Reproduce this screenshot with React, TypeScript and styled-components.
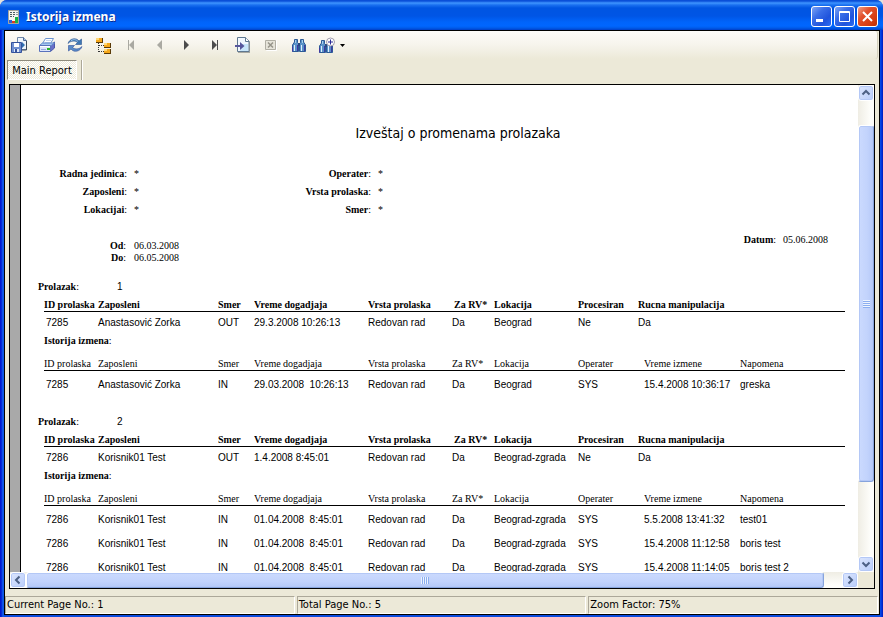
import React from 'react';
import styled, { createGlobalStyle, css } from 'styled-components';

const tahoma = '"DejaVu Sans Condensed", "DejaVu Sans", "Noto Sans", sans-serif';
const serif = '"Liberation Serif", "Times New Roman", serif';
const sans = '"Liberation Sans", Arial, sans-serif';

const GlobalStyle = createGlobalStyle`
  * { box-sizing: border-box; }
  html, body { margin: 0; padding: 0; background: #e4e2dc; }
  button { font: inherit; color: inherit; margin: 0; }
`;

const Window = styled.div`
  display: flex;
  flex-direction: column;
  height: 100vh;
  overflow: hidden;
  border-radius: 7px 7px 0 0;
  background: linear-gradient(90deg, #0019cf 0, #0019cf 1px, #0a3be0 2px, #1166ee 3px, #0a4ce0 4px, #0a4ce0 calc(100% - 3px), #0040e8 calc(100% - 2px), #0019b8 100%);
  font: 11px/14px ${tahoma};
  color: #000;
`;

const TitleBar = styled.header`
  display: flex;
  align-items: center;
  flex: none;
  height: 30px;
  padding: 3px 5px 0 7px;
  background: linear-gradient(180deg, #0a4fd8 0, #0a4fd8 1px, #3f95ff 3px, #1a70f0 5px, #0055e2 8px, #0055e5 16px, #0064fb 22px, #0066ff 26px, #005bea 28px, #003fc8 30px);
`;

const Title = styled.h1`
  flex: 1;
  margin: 0 0 0 6px;
  font: bold 12px/18px "Noto Sans", "Open Sans", sans-serif;
  color: #fff;
  text-shadow: 1px 1px 0 #0a2b90;
`;

const Captions = styled.div`
  display: flex;
  gap: 2px;
`;

const CaptionButton = styled.button<{ $close?: boolean }>`
  display: flex;
  width: 21px;
  height: 21px;
  padding: 0;
  border: 1px solid #fff;
  border-radius: 3px;
  background: ${(p) =>
    p.$close
      ? 'linear-gradient(135deg, #f0a088 0, #e2512c 35%, #d63c10 75%, #b93008 100%)'
      : 'linear-gradient(135deg, #7ea4f4 0, #3a6ee8 35%, #1f53dc 70%, #2a6df5 100%)'};
`;

const Client = styled.main`
  display: flex;
  flex-direction: column;
  flex: 1;
  min-height: 0;
  margin: 0 3px 2px 4px;
  border: 1px solid #000;
  background: #ece9d8;
`;

const Toolbar = styled.div`
  display: flex;
  flex: none;
  height: 28px;
  margin-right: 1px;
  border-right: 1px solid #d5d1bd;
  border-radius: 0 3px 3px 0;
  background: linear-gradient(180deg, #fdfcf9 0, #f6f4ec 50%, #ece9d8 100%);
`;

const ToolButton = styled.button<{ $menu?: boolean }>`
  display: flex;
  align-items: center;
  justify-content: ${(p) => (p.$menu ? 'flex-start' : 'center')};
  gap: 5px;
  width: ${(p) => (p.$menu ? 38 : 28)}px;
  padding: 0 0 0 ${(p) => (p.$menu ? 6 : 0)}px;
  border: 0;
  background: none;
`;

const Tabs = styled.nav`
  display: flex;
  flex: none;
  gap: 4px;
  height: 25px;
  padding: 1px 0 4px 2px;
`;

const Tab = styled.button`
  width: 70px;
  padding: 1px 0 0;
  border: 1px solid;
  border-color: #8d8a7c #fff #fff #8d8a7c;
  background: repeating-conic-gradient(#fff 0 25%, #ece9d8 0 50%) 0 0 / 2px 2px;
`;

const Divider = styled.div`
  width: 2px;
  border-left: 1px solid #aca899;
  border-right: 1px solid #fff;
`;

const Viewer = styled.section`
  display: grid;
  grid-template: minmax(0, 1fr) 16px / minmax(0, 1fr) 16px;
  flex: 1;
  min-height: 0;
  margin: 0 4px 7px;
  border: 1px solid #000;
  background: #ece9d8;
`;

const Canvas = styled.div`
  display: flex;
  overflow: hidden;
  background: #a9a9a9;
`;

const Paper = styled.article`
  flex: 1;
  min-width: 0;
  margin-left: 10px;
  padding: 38px 13px 0 17px;
  border-left: 1px solid #000;
  background: #fff;
  font: 10px/12px ${serif};
`;

const ReportTitle = styled.h2`
  margin: 0 0 22px;
  padding-left: 33px;
  font: 14px/20px "DejaVu Sans Condensed", "DejaVu Sans", sans-serif;
  font-weight: 400;
  text-align: center;
`;

const Parameters = styled.dl`
  display: grid;
  grid-template-columns: 89px 60px 170px 1fr;
  grid-auto-rows: 18px;
  column-gap: 7px;
  align-items: center;
  margin: 0;
`;

const Name = styled.dt`
  font-weight: 700;
  text-align: right;
  white-space: nowrap;
  & > span { font-weight: 400; }
`;

const Value = styled.dd`
  margin: 0;
`;

const Dates = styled.div`
  display: flex;
  justify-content: space-between;
  align-items: flex-start;
  padding: 15px 17px 14px 0;
`;

const Range = styled.dl`
  display: grid;
  grid-template-columns: 88px auto;
  column-gap: 8px;
  margin: 6px 0 0;
`;

const Printed = styled.dl`
  display: flex;
  gap: 7px;
  margin: 0;
`;

const Group = styled.section`
  margin-bottom: 18px;
`;

const GroupLabel = styled.h3`
  display: flex;
  margin: 0;
  font: bold 10px/18px ${serif};
  & > span { font-weight: 400; }
  & > output { margin-left: 38px; font: 10px/18px ${sans}; }
`;

const HistoryLabel = styled.h4`
  margin: -2px 0 5px 6px;
  font: bold 10px/18px ${serif};
  & > span { font-weight: 400; }
`;

const tableBase = css`
  width: calc(100% - 6px);
  margin-left: 6px;
  table-layout: fixed;
  border-collapse: separate;
  border-spacing: 0;
`;

const Table = styled.table<{ $plain?: boolean }>`
  ${tableBase}
  th {
    height: 16px;
    padding: ${(p) => (p.$plain ? 3 : 2)}px 0 0;
    overflow: hidden;
    border-bottom: 1px solid #000;
    font: ${(p) => (p.$plain ? 400 : 700)} 10px/12px ${serif};
    text-align: left;
    white-space: nowrap;
  }
  th:nth-child(6) { padding-left: ${(p) => (p.$plain ? 0 : 2)}px; }
  td {
    height: ${(p) => (p.$plain ? 24 : 22)}px;
    padding: ${(p) => (p.$plain ? 3 : 0)}px 0 0;
    font: 10px/12px ${sans};
    white-space: pre;
    vertical-align: middle;
  }
  td:first-child { padding-left: 2px; }
`;

const Col = styled.col<{ $w?: number }>`
  width: ${(p) => (p.$w ? `${p.$w}px` : 'auto')};
`;

const face = css`
  border: 1px solid #fff;
  border-radius: 3px;
  box-shadow: inset 0 0 0 1px #b4c8f6;
`;

const Scrollbar = styled.div<{ $vertical?: boolean }>`
  display: flex;
  flex-direction: ${(p) => (p.$vertical ? 'column' : 'row')};
  background: linear-gradient(${(p) => (p.$vertical ? '90deg' : '180deg')}, #efede4, #fefefb 80%);
`;

const ScrollButton = styled.button`
  display: flex;
  align-items: center;
  justify-content: center;
  flex: none;
  width: 16px;
  height: 16px;
  padding: 0;
  ${face}
  background: linear-gradient(135deg, #dce6fe, #b9cdfa);
`;

const Thumb = styled.div<{ $vertical?: boolean; $grow: number }>`
  display: flex;
  align-items: center;
  justify-content: center;
  flex: ${(p) => p.$grow} 1 0;
  ${face}
  border-right-color: #86a3dc;
  border-bottom-color: #86a3dc;
  background: linear-gradient(${(p) => (p.$vertical ? '90deg' : '180deg')}, #cbdafe, #c2d3fc 60%, #b5c9f8);
`;

const Space = styled.div<{ $grow: number }>`
  flex: ${(p) => p.$grow} 1 0;
`;

const Grip = styled.div<{ $vertical?: boolean }>`
  width: ${(p) => (p.$vertical ? 7 : 8)}px;
  height: ${(p) => (p.$vertical ? 8 : 7)}px;
  background: repeating-linear-gradient(${(p) => (p.$vertical ? '180deg' : '90deg')}, #eef4fe 0 1px, #8caef0 1px 2px);
`;

const StatusBar = styled.footer`
  display: grid;
  grid-template-columns: repeat(3, 1fr);
  gap: 2px;
  flex: none;
  height: 18px;
  padding-right: 1px;
`;

const StatusCell = styled.div`
  padding: 1px 0 0 1px;
  border: 1px solid;
  border-color: #aca899 #fff #fff #aca899;
  white-space: nowrap;
`;

const Icon = ({ w = 16, h = 16, children }: { w?: number; h?: number; children: React.ReactNode }) => (
  <svg width={w} height={h} viewBox={`0 0 ${w} ${h}`} aria-hidden="true">
    {children}
  </svg>
);

const AppIcon = () => (
  <Icon w={13} h={16}>
    <path d="M1.500 1.500h10v13h-10z" fill="#f4f4f0" stroke="#a4a49c" />
    <path d="M3 3.500h5M3 5.500h5M3 7.500h4" stroke="#4c5a60" strokeDasharray="2 1" />
    <path d="M9 3.500h2M9 5.500h2" stroke="#8c989c" />
    <path d="M2 11h3v3H2z" fill="#2b60d8" />
    <path d="M5 12h3v2H5z" fill="#e03a20" />
    <path d="M8 8h3v6H8z" fill="#18b048" />
  </Icon>
);

const ExportIcon = () => (
  <Icon>
    <path d="M6.500.5h6l3 3v9h-9z" fill="#eef4fb" stroke="#7088a8" />
    <path d="M12.500.5v3h3" fill="#a9c4e4" stroke="#506a94" />
    <path d="M8 7h3V5l3 3-3 3V9H8z" fill="#2f6fb0" />
    <path d="M15.500 4v9H11" fill="none" stroke="#3c4858" />
    <path d="M.5 5.500h10v10h-10z" fill="#6f8fd0" stroke="#34529c" />
    <path d="M3 6h5v4H3z" fill="#fff" />
    <path d="M3 12h5v3H3z" fill="#dfe8f8" />
    <path d="M4 12h2v3H4z" fill="#34529c" />
  </Icon>
);

const PrintIcon = () => (
  <Icon>
    <path d="M6.500 1.500h8l-3 5h-8z" fill="#fff" stroke="#6c94d0" />
    <path d="M7 3.500h5M6 5.500h5" stroke="#c4d4ee" />
    <path d="M11.500 8.500l4-3.500v6l-4 3.500z" fill="#6a70c8" stroke="#4a58a8" />
    <path d="M.5 8.500l3-2.500h12l-4 3z" fill="#a8c8f0" stroke="#5f88cc" />
    <path d="M.5 8.500h11v6H.5z" fill="#dde6fa" stroke="#5a72bc" />
    <path d="M1 9.500h10" stroke="#fff" />
    <path d="M8 11h3v2H8z" fill="#28b428" />
    <path d="M2 12.500h5" stroke="#98a8dc" />
  </Icon>
);

const RefreshIcon = () => (
  <Icon>
    <path d="M1 6.500C2.500 1.500 9 0 12 4l2.500-2v5.500H8.500L10.500 5.500C8 3.500 4 3.500 1 6.500z" fill="#3f78b4" stroke="#2a5290" strokeWidth=".6" />
    <path d="M15 9.500C13.500 14.500 7 16 4 12l-2.500 2V8.500h6L5.500 10.500C8 12.500 12 12.500 15 9.500z" fill="#5a8cc8" stroke="#34509c" strokeWidth=".6" />
    <path d="M4 3.800c2.500-1.800 5-1.500 7 .8" fill="none" stroke="#9cc4ea" />
  </Icon>
);

const TreeIcon = () => (
  <Icon w={17} h={17}>
    <path d="M3.500 6v9M4 8.500h5M4 14.500h5" stroke="#333" strokeDasharray="1 1" fill="none" />
    {[[1, 1], [9, 6], [9, 12]].map(([x, y]) => (
      <g key={`${x}-${y}`} shapeRendering="crispEdges">
        <path d={`M${x} ${y}h7v5h-7z`} fill="#5a3a08" />
        <path d={`M${x} ${y}h6v4h-6z`} fill="#f5a81c" />
        <path d={`M${x} ${y}h3v2h-3z`} fill="#ffd978" />
      </g>
    ))}
  </Icon>
);

const StepIcon = ({ back, bar, dim }: { back?: boolean; bar?: boolean; dim?: boolean }) => (
  <Icon w={8} h={10}>
    <g fill={dim ? '#aaa9a2' : '#4c4c4c'}>
      {back ? <path d="M7 0v10L2 5z" /> : <path d="M1 0v10l5-5z" />}
      {bar && (back ? <path d="M1 0h1v10H1z" /> : <path d="M6 0h1v10H6z" />)}
    </g>
  </Icon>
);

const GotoIcon = () => (
  <Icon>
    <path d="M3 1h8l4 4v11H3z" fill="#a8a8a0" />
    <path d="M2.500.5h8l3.500 3.500v10.500h-11.500z" fill="#f2f8ff" stroke="#5f7890" />
    <path d="M7 7h6v7H5z" fill="#c8e6fa" />
    <path d="M10.500.5v4H14" fill="#fff" stroke="#5f7890" />
    <path d="M0 8h5V5l4.500 4L5 13v-3H0z" fill="#57579c" />
  </Icon>
);

const CloseIcon = () => (
  <Icon w={12} h={12}>
    <path d="M1.500 1.500h10v10h-10z" fill="none" stroke="#fff" />
    <path d="M.5 1.500h10v9H.5z" fill="#e6e4da" stroke="#b0aea4" />
    <path d="M3 3.500l5 5M8 3.500l-5 5" stroke="#96948a" strokeWidth="1.500" />
  </Icon>
);

const binocularShape = (
  <>
    <path d="M2.500 1.500h3v3l1 1v8h-6V7l2-3zM11.500 1.500h-3v3l-1 1v8h6V7l-2-3z" fill="#5a92c8" stroke="#2c5a96" />
    <path d="M6 5h2v3H6z" fill="#2b4a80" />
    <path d="M2.500 7v6M9.500 7v6" stroke="#e2f0fc" />
    <path d="M5.500 7v6M12.500 7v6M.5 9v4.500" stroke="#4038a0" />
    <path d="M3.500 2v3M10.500 2v3" stroke="#a4d0ee" />
  </>
);

const FindIcon = () => <Icon w={14} h={15}>{binocularShape}</Icon>;

const FindMoreIcon = () => (
  <Icon w={16} h={17}>
    <g transform="translate(0 2)">{binocularShape}</g>
    <circle cx="11.500" cy="5" r="4" fill="#fff" stroke="#a09cac" />
    <path d="M11.500 2.500v5M9 5h5" stroke="#2a2a96" />
  </Icon>
);

const CaretIcon = () => (
  <Icon w={5} h={3}>
    <path d="M0 0h5L2.500 3z" fill="#000" />
  </Icon>
);

const rotations = { up: 0, right: 90, down: 180, left: 270 };

const Chevron = ({ to }: { to: keyof typeof rotations }) => (
  <Icon w={10} h={10}>
    <path d="M1.500 6.500L5 3l3.500 3.500" transform={`rotate(${rotations[to]} 5 5)`} fill="none" stroke="#4d6185" strokeWidth="2" />
  </Icon>
);

const tools: [string, React.ReactNode][] = [
  ['Export', <ExportIcon />],
  ['Print', <PrintIcon />],
  ['Refresh', <RefreshIcon />],
  ['Toggle group tree', <TreeIcon />],
  ['First page', <StepIcon back bar dim />],
  ['Previous page', <StepIcon back dim />],
  ['Next page', <StepIcon />],
  ['Last page', <StepIcon bar />],
  ['Go to page', <GotoIcon />],
  ['Close view', <CloseIcon />],
  ['Find text', <FindIcon />],
];

const eventHeads = ['ID prolaska', 'Zaposleni', 'Smer', 'Vreme dogadjaja', 'Vrsta prolaska', 'Za RV*', 'Lokacija', 'Procesiran', 'Rucna manipulacija'];
const historyHeads = ['ID prolaska', 'Zaposleni', 'Smer', 'Vreme dogadjaja', 'Vrsta prolaska', 'Za RV*', 'Lokacija', 'Operater', 'Vreme izmene', 'Napomena'];
const sharedWidths = [54, 120, 36, 114, 84, 42, 84];

const groups = [
  {
    id: 1,
    event: ['7285', 'Anastasović Zorka', 'OUT', '29.3.2008 10:26:13', 'Redovan rad', 'Da', 'Beograd', 'Ne', 'Da'],
    history: [
      ['7285', 'Anastasović Zorka', 'IN', '29.03.2008  10:26:13', 'Redovan rad', 'Da', 'Beograd', 'SYS', '15.4.2008 10:36:17', 'greska'],
    ],
  },
  {
    id: 2,
    event: ['7286', 'Korisnik01 Test', 'OUT', '1.4.2008 8:45:01', 'Redovan rad', 'Da', 'Beograd-zgrada', 'Ne', 'Da'],
    history: [
      ['7286', 'Korisnik01 Test', 'IN', '01.04.2008  8:45:01', 'Redovan rad', 'Da', 'Beograd-zgrada', 'SYS', '5.5.2008 13:41:32', 'test01'],
      ['7286', 'Korisnik01 Test', 'IN', '01.04.2008  8:45:01', 'Redovan rad', 'Da', 'Beograd-zgrada', 'SYS', '15.4.2008 11:12:58', 'boris test'],
      ['7286', 'Korisnik01 Test', 'IN', '01.04.2008  8:45:01', 'Redovan rad', 'Da', 'Beograd-zgrada', 'SYS', '15.4.2008 11:14:05', 'boris test 2'],
    ],
  },
];

const parameters = ['Radna jedinica', 'Operater', 'Zaposleni', 'Vrsta prolaska', 'Lokacijai', 'Smer'];

type ReportTableProps = { heads: string[]; widths: number[]; rows: string[][]; plain?: boolean };

const ReportTable = ({ heads, widths, rows, plain }: ReportTableProps) => (
  <Table $plain={plain}>
    <colgroup>
      {heads.map((h, i) => <Col key={h} $w={widths[i]} />)}
    </colgroup>
    <thead>
      <tr>{heads.map((h) => <th key={h} scope="col">{h}</th>)}</tr>
    </thead>
    <tbody>
      {rows.map((cells, r) => (
        <tr key={r}>{cells.map((c, i) => <td key={i}>{c}</td>)}</tr>
      ))}
    </tbody>
  </Table>
);

export default function App() {
  return (
    <>
      <GlobalStyle />
      <Window>
        <TitleBar>
          <AppIcon />
          <Title>Istorija izmena</Title>
          <Captions>
            <CaptionButton aria-label="Minimize">
              <Icon w={19} h={19}><path d="M4 12h7v3H4z" fill="#fff" /></Icon>
            </CaptionButton>
            <CaptionButton aria-label="Maximize">
              <Icon w={19} h={19}><path d="M4.500 4.500h10v10h-10zM4 5.500h11" fill="none" stroke="#fff" /></Icon>
            </CaptionButton>
            <CaptionButton aria-label="Close" $close>
              <Icon w={19} h={19}><path d="M5 5l9 9M14 5l-9 9" stroke="#fff" strokeWidth="2" /></Icon>
            </CaptionButton>
          </Captions>
        </TitleBar>
        <Client>
          <Toolbar role="toolbar">
            {tools.map(([label, icon]) => (
              <ToolButton key={label} aria-label={label}>{icon}</ToolButton>
            ))}
            <ToolButton aria-label="Zoom" $menu>
              <FindMoreIcon />
              <CaretIcon />
            </ToolButton>
          </Toolbar>
          <Tabs>
            <Tab>Main Report</Tab>
            <Divider />
          </Tabs>
          <Viewer>
            <Canvas>
              <Paper>
                <ReportTitle>Izveštaj o promenama prolazaka</ReportTitle>
                <Parameters>
                  {parameters.map((p) => (
                    <React.Fragment key={p}>
                      <Name>{p}<span>:</span></Name>
                      <Value>*</Value>
                    </React.Fragment>
                  ))}
                </Parameters>
                <Dates>
                  <Range>
                    <Name>Od<span>:</span></Name>
                    <Value>06.03.2008</Value>
                    <Name>Do<span>:</span></Name>
                    <Value>06.05.2008</Value>
                  </Range>
                  <Printed>
                    <Name>Datum<span>:</span></Name>
                    <Value>05.06.2008</Value>
                  </Printed>
                </Dates>
                {groups.map((g) => (
                  <Group key={g.id}>
                    <GroupLabel>Prolazak<span>:</span><output>{g.id}</output></GroupLabel>
                    <ReportTable heads={eventHeads} widths={[...sharedWidths, 60]} rows={[g.event]} />
                    <HistoryLabel>Istorija izmena<span>:</span></HistoryLabel>
                    <ReportTable heads={historyHeads} widths={[...sharedWidths, 66, 96]} rows={g.history} plain />
                  </Group>
                ))}
              </Paper>
            </Canvas>
            <Scrollbar $vertical>
              <ScrollButton aria-label="Scroll up"><Chevron to="up" /></ScrollButton>
              <Space $grow={24} />
              <Thumb $vertical $grow={356}><Grip $vertical /></Thumb>
              <Space $grow={74} />
              <ScrollButton aria-label="Scroll down"><Chevron to="down" /></ScrollButton>
            </Scrollbar>
            <Scrollbar>
              <ScrollButton aria-label="Scroll left"><Chevron to="left" /></ScrollButton>
              <Thumb $grow={796}><Grip /></Thumb>
              <Space $grow={18} />
              <ScrollButton aria-label="Scroll right"><Chevron to="right" /></ScrollButton>
            </Scrollbar>
          </Viewer>
          <StatusBar>
            <StatusCell>Current Page No.: 1</StatusCell>
            <StatusCell>Total Page No.: 5</StatusCell>
            <StatusCell>Zoom Factor: 75%</StatusCell>
          </StatusBar>
        </Client>
      </Window>
    </>
  );
}
